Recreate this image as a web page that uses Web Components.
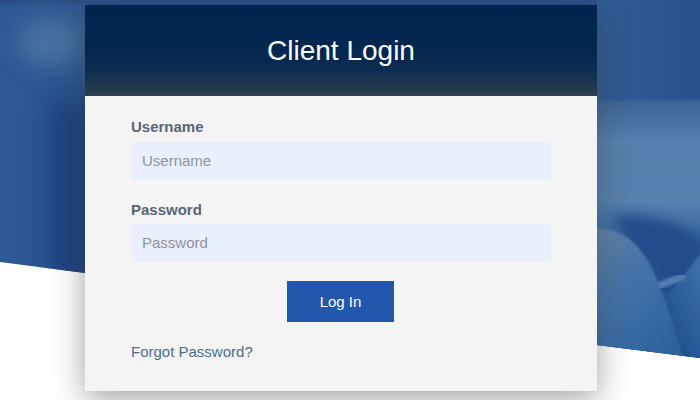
<!DOCTYPE html>
<html lang="en">
<head>
<meta charset="utf-8">
<title>Client Login</title>
<style>
  html, body { margin: 0; height: 100%; background: #fff; }
  body { font-family: "Liberation Sans", Arial, sans-serif; overflow: hidden; }
</style>
</head>
<body>
<login-page>
  <login-card heading="Client Login">
    <login-field label="Username" placeholder="Username"></login-field>
    <login-field label="Password" placeholder="Password" type="password"></login-field>
    <login-button>Log In</login-button>
    <a slot="footer" href="#">Forgot Password?</a>
  </login-card>
</login-page>

<script>
const pageTemplate = document.createElement('template');
pageTemplate.innerHTML = `
  <style>
    :host { display: block; position: relative; width: 700px; height: 400px; overflow: hidden; }
    svg { position: absolute; left: 0; top: 0; }
    .content { position: relative; display: flex; justify-content: flex-start; padding: 5px 0 0 85px; }
  </style>
  <svg width="700" height="400" viewBox="0 0 700 400">
    <defs>
      <filter id="b12" x="-80%" y="-80%" width="260%" height="260%"><feGaussianBlur stdDeviation="12"/></filter>
      <filter id="b6" x="-40%" y="-40%" width="180%" height="180%"><feGaussianBlur stdDeviation="6"/></filter>
      <filter id="b1" x="-20%" y="-20%" width="140%" height="140%"><feGaussianBlur stdDeviation="1"/></filter>
      <linearGradient id="left" x1="0" y1="0" x2="1" y2="0">
        <stop offset="0" stop-color="#2d5894"/>
        <stop offset="0.5" stop-color="#254c89"/>
        <stop offset="1" stop-color="#214684"/>
      </linearGradient>
      <linearGradient id="topright" x1="0" y1="0" x2="1" y2="0">
        <stop offset="0" stop-color="#2f5b94"/>
        <stop offset="1" stop-color="#28528c"/>
      </linearGradient>
      <linearGradient id="lowright" x1="0" y1="0" x2="0" y2="1">
        <stop offset="0" stop-color="#3b6496"/>
        <stop offset="0.16" stop-color="#5880ad"/>
        <stop offset="0.38" stop-color="#5682ae"/>
        <stop offset="0.5" stop-color="#3b6ca3"/>
        <stop offset="0.6" stop-color="#2a5a98"/>
        <stop offset="1" stop-color="#24508e"/>
      </linearGradient>
      <linearGradient id="lobe" x1="0" y1="0" x2="0.7" y2="1">
        <stop offset="0" stop-color="#6683a8"/>
        <stop offset="0.45" stop-color="#4273a9"/>
        <stop offset="1" stop-color="#2f629e"/>
      </linearGradient>
      <linearGradient id="wedge" x1="1" y1="0" x2="0.3" y2="1">
        <stop offset="0" stop-color="#4274ab"/>
        <stop offset="0.55" stop-color="#2c5e9b"/>
        <stop offset="1" stop-color="#1e4a8a"/>
      </linearGradient>
      <clipPath id="hero"><path d="M0 0H700V358L597 345L85 273L0 262Z"/></clipPath>
    </defs>
    <g clip-path="url(#hero)">
      <rect width="700" height="400" fill="url(#left)"/>
      <rect x="0" y="0" width="600" height="5" fill="#2b5089"/>
      <ellipse cx="52" cy="42" rx="36" ry="24" fill="#4a72a2" filter="url(#b12)"/>
      <rect x="50" y="100" width="60" height="190" fill="#1c4180" filter="url(#b12)"/>
      <rect x="597" y="0" width="103" height="100" fill="url(#topright)"/>
      <rect x="590" y="100" width="120" height="262" fill="url(#lowright)" filter="url(#b1)"/>
      <path d="M612 216C650 212 685 226 704 240V304L660 292L640 262Z" fill="#224d8c" filter="url(#b6)"/>
      <path d="M662 305C675 285 690 268 702 252V362H685Z" fill="url(#wedge)" filter="url(#b1)"/>
      <path d="M658 286L682 277" stroke="#4f7fb0" stroke-width="7" stroke-linecap="round" filter="url(#b1)"/>
      <path d="M590 229C625 224 646 250 658 282C669 310 677 335 684 362H590Z" fill="url(#lobe)" filter="url(#b1)"/>
    </g>
  </svg>
  <div class="content"><slot></slot></div>
`;

class LoginPage extends HTMLElement {
  constructor() {
    super();
    this.attachShadow({ mode: 'open' }).appendChild(pageTemplate.content.cloneNode(true));
  }
}

const cardTemplate = document.createElement('template');
cardTemplate.innerHTML = `
  <style>
    :host { display: block; width: 512px; height: 386px; background: #f4f4f4; box-shadow: 0 8px 30px rgba(60,60,60,.48); }
    header {
      height: 91px; display: flex; align-items: center; justify-content: center;
      background: linear-gradient(#00244f 0, #03264f 50%, #0c2d52 72%, #2f3f50 100%);
      color: #fff; font-size: 28px; box-sizing: border-box;
    }
    .body { display: flex; flex-direction: column; padding: 22px 46px 0; }
    .foot { margin-top: 21px; font-size: 15px; line-height: 18px; }
    ::slotted(a) { color: #4c6f8e; text-decoration: none; }
  </style>
  <header></header>
  <div class="body">
    <slot></slot>
    <div class="foot"><slot name="footer"></slot></div>
  </div>
`;

class LoginCard extends HTMLElement {
  constructor() {
    super();
    this.attachShadow({ mode: 'open' }).appendChild(cardTemplate.content.cloneNode(true));
    this.shadowRoot.querySelector('header').textContent = this.getAttribute('heading');
  }
}

const fieldTemplate = document.createElement('template');
fieldTemplate.innerHTML = `
  <style>
    :host { display: block; margin-bottom: 20px; }
    :host([type="password"]) label { margin: 1px 0 5px; }
    :host([type="password"]) input { padding-bottom: 1px; }
    label { display: block; color: #596478; font-size: 15px; font-weight: bold; line-height: 18px; margin-bottom: 6px; }
    input {
      display: block; width: 420px; height: 38px; box-sizing: border-box; padding: 0 11px 2px; border: 0; outline: 0;
      background: #e9f0fd; font: 15px "Liberation Sans", Arial, sans-serif; color: #333;
    }
    input::placeholder { color: #8d93a3; opacity: 1; }
  </style>
  <label></label>
  <input>
`;

class LoginField extends HTMLElement {
  constructor() {
    super();
    this.attachShadow({ mode: 'open' }).appendChild(fieldTemplate.content.cloneNode(true));
    const input = this.shadowRoot.querySelector('input');
    this.shadowRoot.querySelector('label').textContent = this.getAttribute('label');
    input.placeholder = this.getAttribute('placeholder');
    input.type = this.getAttribute('type') || 'text';
  }
}

const buttonTemplate = document.createElement('template');
buttonTemplate.innerHTML = `
  <style>
    :host { display: flex; justify-content: center; margin-top: -1px; padding-right: 1px; }
    button {
      width: 107px; height: 41px; border: 0; padding: 0; background: #2257ab; color: #fff;
      font: 15px "Liberation Sans", Arial, sans-serif; cursor: pointer;
    }
  </style>
  <button><slot></slot></button>
`;

class LoginButton extends HTMLElement {
  constructor() {
    super();
    this.attachShadow({ mode: 'open' }).appendChild(buttonTemplate.content.cloneNode(true));
  }
}

customElements.define('login-page', LoginPage);
customElements.define('login-card', LoginCard);
customElements.define('login-field', LoginField);
customElements.define('login-button', LoginButton);
</script>
</body>
</html>
